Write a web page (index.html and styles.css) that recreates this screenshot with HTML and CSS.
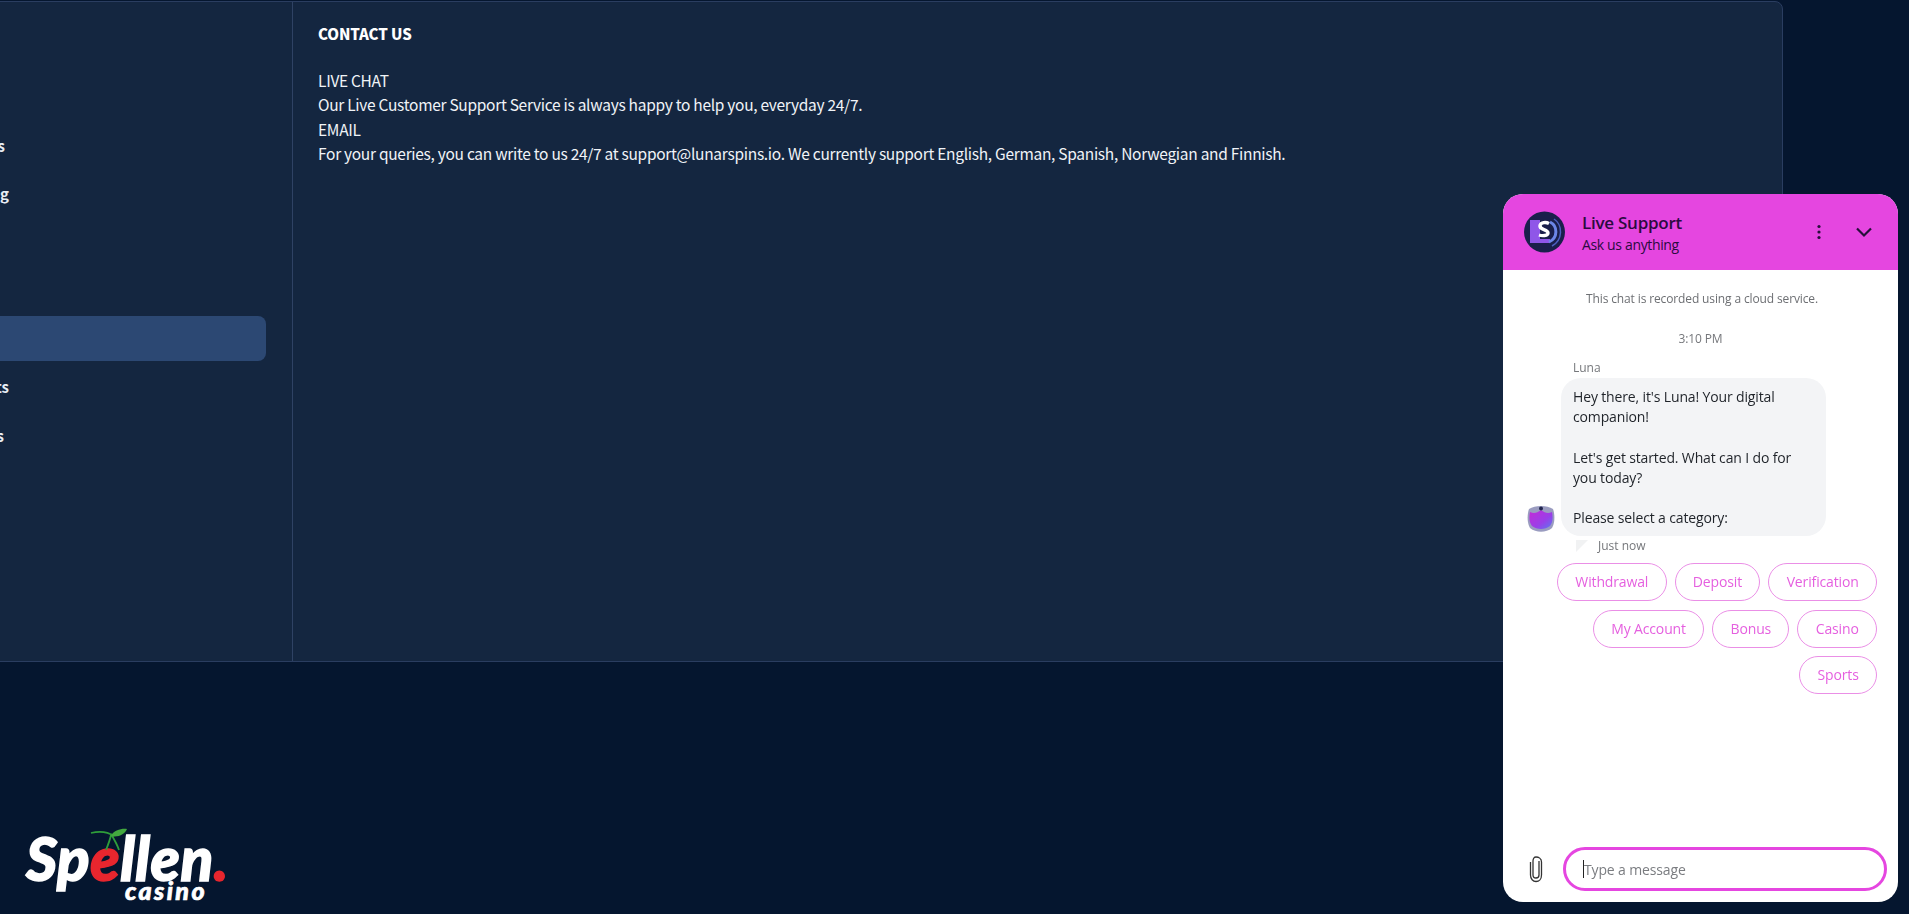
FILE: index.html
```html
<!DOCTYPE html>
<html lang="en">
<head>
<meta charset="utf-8">
<title>Contact Us</title>
<link rel="stylesheet" href="styles.css">
</head>
<body>
<main class="page">
  <section class="panel">
    <nav class="sidenav">
      <a class="nav-item"><span class="nav-label nav-a">Bonus Terms</span></a>
      <a class="nav-item"><span class="nav-label nav-b">Responsible Gaming</span></a>
      <a class="nav-item"><span class="nav-label nav-off">Privacy Policy</span></a>
      <a class="nav-item"><span class="nav-label nav-off">Cookie Policy</span></a>
      <a class="nav-item active"><span class="nav-label nav-off">Contact Us</span></a>
      <a class="nav-item"><span class="nav-label nav-c">Payment Limits</span></a>
      <a class="nav-item"><span class="nav-label nav-d">Affiliates</span></a>
    </nav>
    <article class="content">
      <h1 class="title">CONTACT US</h1>
      <p class="line">LIVE CHAT</p>
      <p class="line">Our Live Customer Support Service is always happy to help you, everyday 24/7.</p>
      <p class="line">EMAIL</p>
      <p class="line">For your queries, you can write to us 24/7 at support@lunarspins.io. We currently support English, German, Spanish, Norwegian and Finnish.</p>
    </article>
  </section>
  <footer class="brand">
    <div class="logo">
      <div class="wordmark">Sp<span class="red">e</span>llen<span class="red dot">.</span></div>
      <svg class="cherry" width="48" height="26" viewBox="0 0 48 26" aria-hidden="true">
        <path d="M1 5C9 3 18 4 24 8" fill="none" stroke="#2f9e3a" stroke-width="1.800"/>
        <path d="M21 6C24 11 27 16 29 22M21 7C20 12 18 17 16 22" fill="none" stroke="#2f9e3a" stroke-width="1.800"/>
        <path d="M21 8C23 2 33 0 37 1C35 6 28 10 21 8Z" fill="#43a83f"/>
      </svg>
      <div class="casino">casino</div>
    </div>
  </footer>
</main>

<aside class="chat">
  <header class="chat-head">
    <svg class="chat-logo" width="43" height="42" viewBox="0 0 43 42" aria-hidden="true">
      <circle cx="21.500" cy="21" r="20.500" fill="#1a1f4b"/>
      <path d="M7 9h10v19h10v4H7Z" fill="#8f56e8"/>
      <path d="M27 11C35 15 35 27 26 31" fill="none" stroke="#6c86e8" stroke-width="3"/>
      <path d="M31 8C40 14 40 29 29 35" fill="none" stroke="#4d5fc0" stroke-width="1.500"/>
      <path d="M26 12.500C23 11 18 11 17 14.500C16 19 25 18 25 22C25 25 19 25 16 24" fill="none" stroke="#fff" stroke-width="3.400"/>
    </svg>
    <div class="chat-titles">
      <div class="chat-title">Live Support</div>
      <div class="chat-sub">Ask us anything</div>
    </div>
    <svg class="dots" width="6" height="16" viewBox="0 0 6 16" aria-hidden="true">
      <circle cx="3" cy="2.500" r="1.600"/><circle cx="3" cy="8" r="1.600"/><circle cx="3" cy="13.500" r="1.600"/>
    </svg>
    <svg class="chev" width="18" height="12" viewBox="0 0 18 12" aria-hidden="true">
      <path d="M2 2.500L9 9.500L16 2.500" fill="none" stroke="#26103a" stroke-width="2.200"/>
    </svg>
  </header>
  <div class="chat-body">
    <p class="notice">This chat is recorded using a cloud service.</p>
    <p class="time">3:10 PM</p>
    <p class="sender">Luna</p>
    <div class="msg">
      <svg class="luna" width="30" height="28" viewBox="0 0 30 28" aria-hidden="true">
        <defs><linearGradient id="lg" x1="0" y1="0" x2="1" y2="1"><stop offset="0" stop-color="#c42bd6"/><stop offset="0.600" stop-color="#9a3fe8"/><stop offset="1" stop-color="#5a7af0"/></linearGradient></defs>
        <path d="M3 4C9 0 21 0 27 4C29 10 29 18 26 23C20 28 10 28 4 23C1 18 1 10 3 4Z" fill="#9a9cc0"/>
        <path d="M4 7C8 9 11 8 15 5C19 8 22 9 26 7C27 12 27 17 24 21C19 25 11 25 6 21C3 17 3 12 4 7Z" fill="url(#lg)"/>
        <circle cx="15" cy="3.500" r="2" fill="#23264f"/>
      </svg>
      <div class="bubble">Hey there, it's Luna! Your digital companion!<br><br>Let's get started. What can I do for you today?<br><br>Please select a category:</div>
    </div>
    <div class="status"><span class="tick"></span>Just now</div>
    <div class="chips">
      <button class="chip">Withdrawal</button>
      <button class="chip">Deposit</button>
      <button class="chip">Verification</button>
      <button class="chip">My Account</button>
      <button class="chip">Bonus</button>
      <button class="chip">Casino</button>
      <button class="chip">Sports</button>
    </div>
  </div>
  <div class="composer">
    <svg class="clip" width="16" height="28" viewBox="0 0 16 28" aria-hidden="true">
      <path d="M11 6V20C11 22 10 23 8 23C6 23 5 22 5 20V6C5 3.500 6.200 2 8 2C10.500 2 13.500 3.500 13.500 7V20C13.500 24 11 26.500 8 26.500C5 26.500 2.500 24 2.500 20V7" fill="none" stroke="#333" stroke-width="1.300"/>
    </svg>
    <div class="input"><span class="caret"></span><span class="placeholder">Type a message</span></div>
  </div>
</aside>
</body>
</html>
```
FILE: styles.css
```css
* { box-sizing: border-box; }
html, body { margin: 0; height: 100%; overflow: hidden; }
body {
  background: #05162f;
  color: #fff;
  font-family: "Noto Sans CJK SC", "Noto Sans", sans-serif;
}
.page { display: flex; flex-direction: column; height: 914px; padding-top: 1px; margin-left: -300px; width: 2083px; }
.panel {
  display: flex;
  height: 661px;
  flex: none;
  background: #142640;
  border: 1px solid #2a3d60;
  border-radius: 0 8px 8px 0;
}
.sidenav {
  width: 592px;
  flex: none;
  padding: 121px 26px 0 0;
  border-right: 1px solid #2f4264;
  display: flex;
  flex-direction: column;
  gap: 4.200px;
}
.nav-item {
  height: 44px;
  flex: none;
  display: flex;
  align-items: center;
  border-radius: 0 8px 8px 0;
  font-size: 15px;
  font-weight: 700;
  color: #e8edf5;
}
.nav-item.active { background: #2c4873; border-radius: 8px; height: 45px; }
.nav-label { display: block; text-align: right; white-space: nowrap; }
.nav-a { width: 304px; }
.nav-b { width: 308px; }
.nav-c { width: 308px; }
.nav-d { width: 303px; }
.nav-off { width: 290px; }
.content { padding: 22px 25px; flex: 1; font-size: 15.500px; letter-spacing: -0.290px; }
.title { margin: 0 0 24px; font-size: 15px; font-weight: 900; line-height: 20px; color: #fff; letter-spacing: -0.130px; }
.line { margin: 0; line-height: 24.400px; color: #f0f3f7; white-space: nowrap; }
.brand { flex: 1; display: flex; align-items: flex-end; padding: 0 0 14px 326px; }
.logo { position: relative; width: 205px; height: 72px; }
.cherry { position: absolute; left: 64px; top: 0; }
.wordmark {
  position: absolute;
  left: 0;
  top: -6px;
  font-family: Lato, "Noto Sans", sans-serif;
  font-weight: 900;
  font-style: italic;
  font-size: 60px;
  line-height: 72px;
  letter-spacing: 0.500px;
  color: #fff;
  -webkit-text-stroke: 1.500px currentColor;
  white-space: nowrap;
}
.red { color: #e8262e; }
.casino {
  position: absolute;
  left: 99px;
  bottom: -4px;
  font-family: Lato, "Noto Sans", sans-serif;
  font-weight: 900;
  font-style: italic;
  font-size: 25px;
  line-height: 28px;
  letter-spacing: 2.400px;
  color: #fff;
  -webkit-text-stroke: 0.700px currentColor;
}

.chat {
  position: fixed;
  left: 1503px;
  top: 194px;
  width: 395px;
  height: 708px;
  background: #fff;
  border-radius: 20px;
  overflow: hidden;
  display: flex;
  flex-direction: column;
  font-family: "Open Sans", "Noto Sans", sans-serif;
  color: #1f2329;
}
.chat-head {
  height: 76px;
  flex: none;
  background: #e546e0;
  display: flex;
  align-items: center;
  padding: 0 25px 0 20px;
}
.chat-titles { margin-left: 16px; flex: 1; color: #2b0b3f; padding-top: 1px; }
.chat-title { font-size: 17px; font-weight: 600; line-height: 24px; letter-spacing: -0.250px; }
.chat-sub { font-size: 14px; line-height: 20px; letter-spacing: -0.350px; }
.dots { fill: #26103a; margin-right: 33px; }
.chat-body { flex: 1; padding: 21px 20px 0 23px; min-height: 0; }
.notice { margin: 0; text-align: center; font-size: 12px; line-height: 16px; color: #6d6f73; letter-spacing: -0.130px; }
.time { margin: 24px 0 0; text-align: center; font-size: 12px; line-height: 16px; color: #75777b; letter-spacing: -0.130px; padding-right: 3px; }
.sender { margin: 13px 0 0 47px; font-size: 12px; line-height: 16px; color: #75777b; }
.msg { display: flex; align-items: flex-end; gap: 5px; margin-top: 2px; }
.luna { flex: none; margin-bottom: 3px; }
.bubble {
  width: 265px;
  padding: 9px 12px 8px;
  background: #f3f4f6;
  border-radius: 20px;
  font-size: 14px;
  line-height: 20.200px;
  letter-spacing: -0.140px;
  color: #1f2329;
}
.status { display: flex; align-items: center; margin: 2px 0 0 50px; font-size: 12px; line-height: 16px; color: #75777b; }
.tick { width: 0; height: 0; border-top: 12px solid #f1f2f3; border-right: 12px solid transparent; margin-right: 10px; }
.chips { display: flex; flex-wrap: wrap; justify-content: flex-end; gap: 8.500px 8px; width: 330px; margin: 9px 0 0 21px; }
.chip {
  height: 38px;
  padding: 0 17.300px;
  background: #fff;
  border: 1.500px solid #ea8fe6;
  border-radius: 19px;
  color: #e55fdf;
  font: 14px/20px "Open Sans", "Noto Sans", sans-serif;
  letter-spacing: -0.140px;
}
.composer { flex: none; display: flex; align-items: center; padding: 0 11px 11px 25px; gap: 19px; }
.clip { flex: none; }
.input {
  flex: 1;
  height: 44px;
  border: 3px solid #e546e0;
  border-radius: 22px;
  display: flex;
  align-items: center;
  padding-left: 17px;
  font-size: 14px;
  letter-spacing: -0.140px;
  color: #7a7c80;
}
.caret { width: 1px; height: 18px; background: #222; flex: none; }
```
